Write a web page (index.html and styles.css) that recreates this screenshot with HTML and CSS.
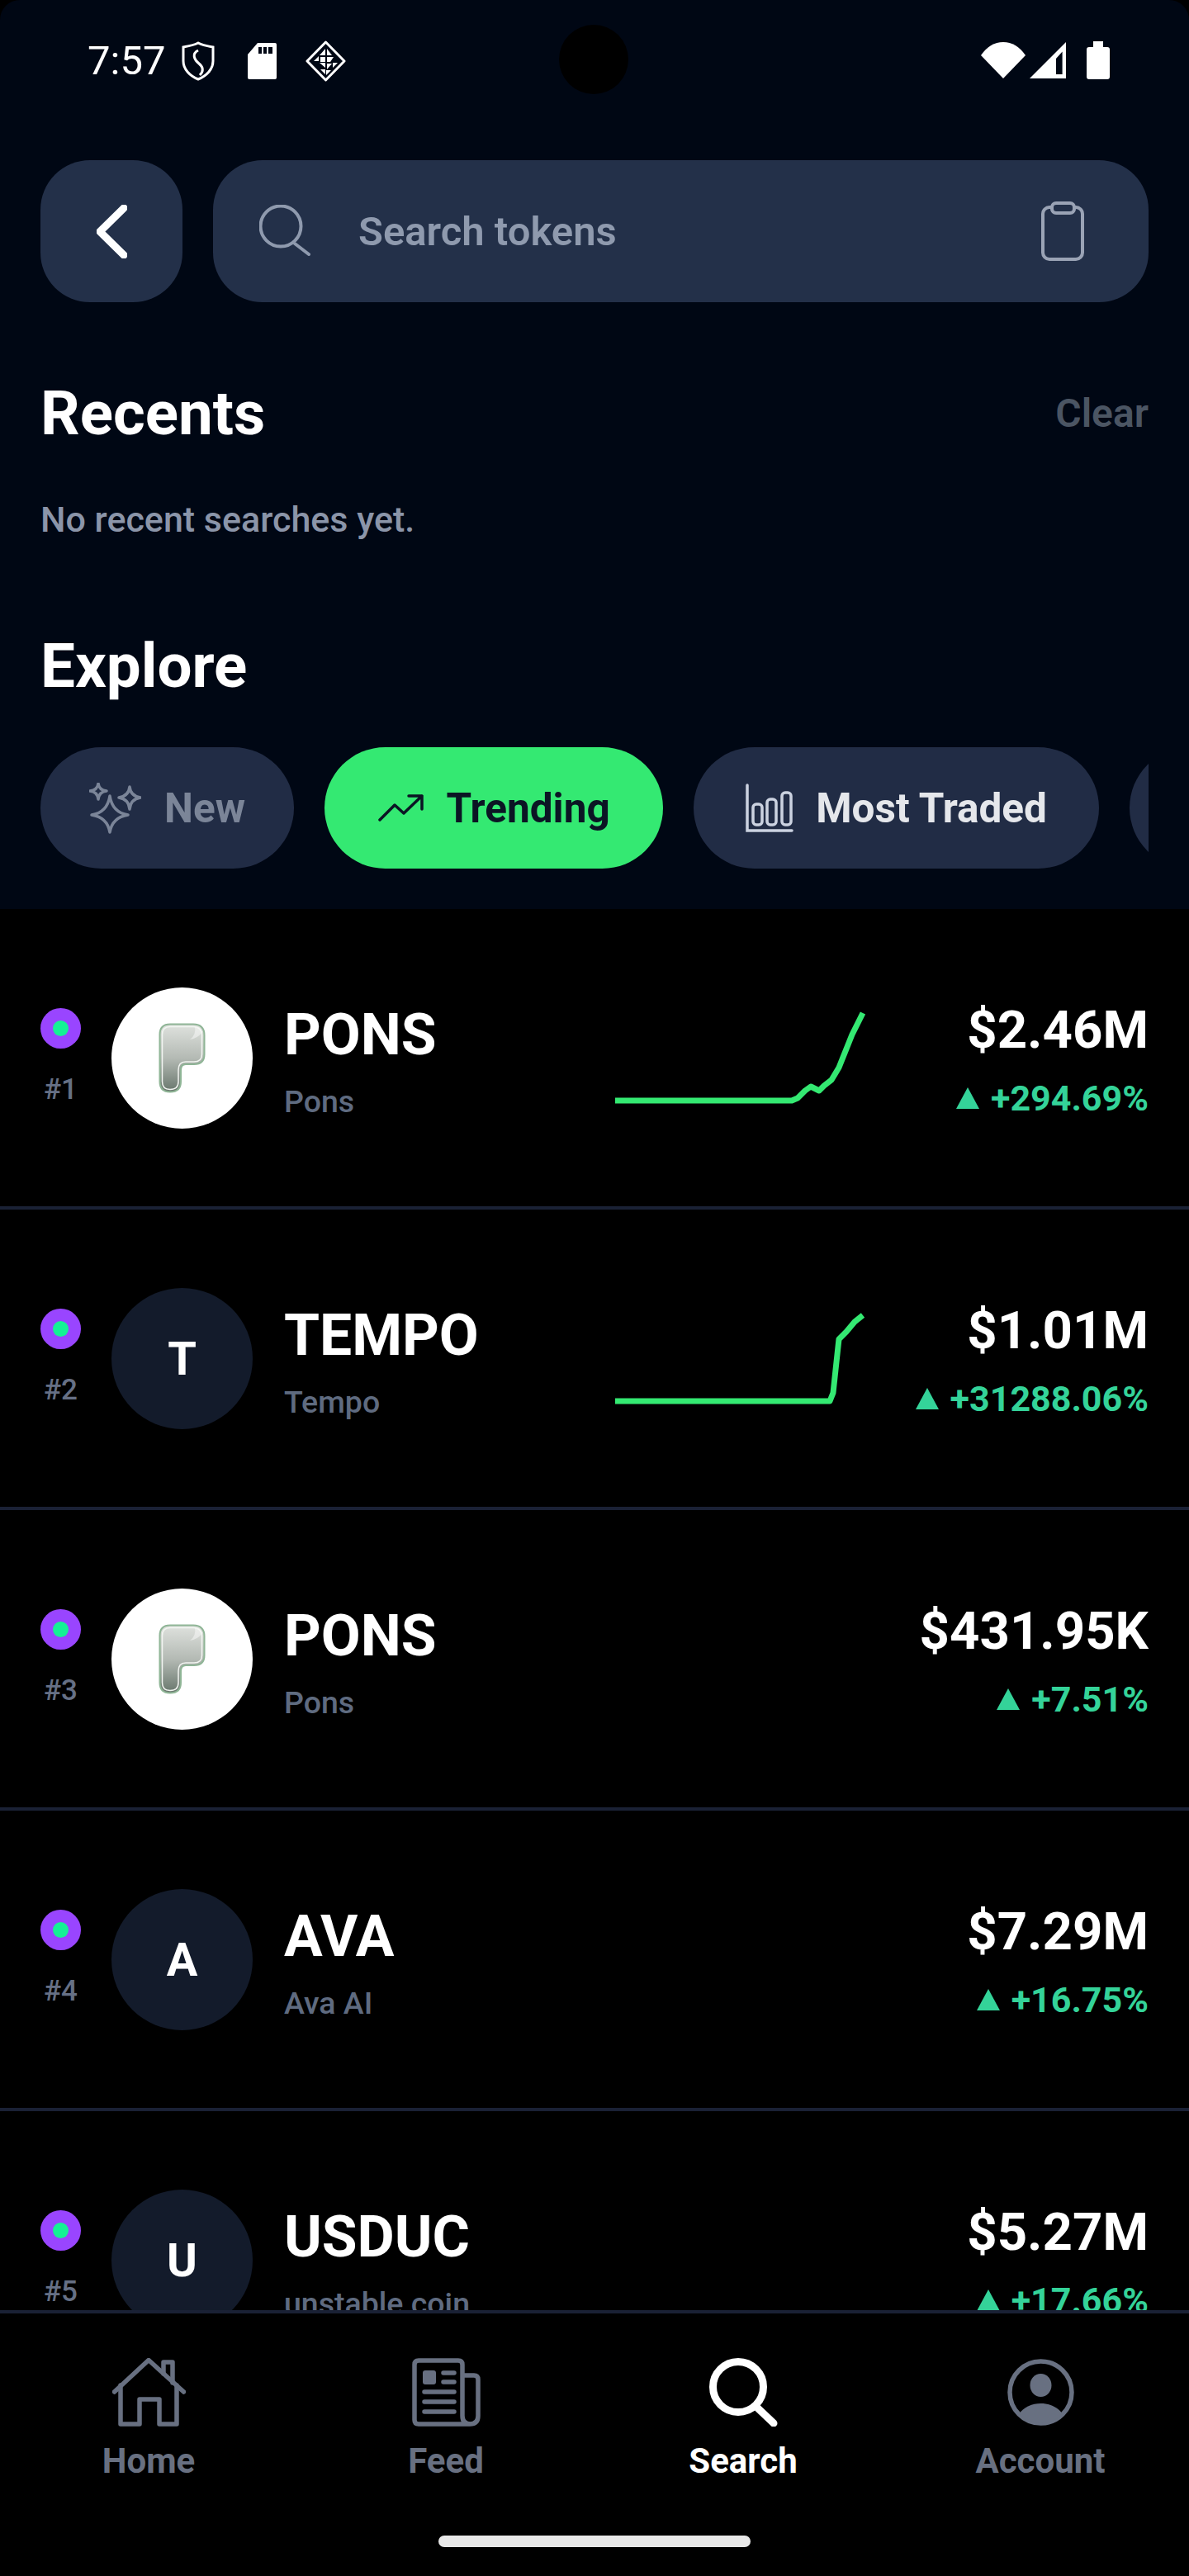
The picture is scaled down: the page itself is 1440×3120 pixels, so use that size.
FILE: index.html
```html
<!DOCTYPE html>
<html lang="en">
  <head>
    <meta http-equiv="Content-Type" content="text/html;charset=UTF-8" />
    <meta name="viewport" content="width=device-width, initial-scale=1.0" />
    <title>Search tokens</title>
    <link rel="stylesheet" href="styles.css">
  </head>
  <body>
    <div class="app">
      <header class="top">
        <div class="camera"></div>
        <div class="status">
          <div class="status-left">
            <span class="clock">7:57</span>
            <svg class="st-shield" width="40" height="48" viewBox="0 0 40 48"><path d="M20 2 C26 5 32 6 38 7 V24 C38 34 30 42 20 46 C10 42 2 34 2 24 V7 C8 6 14 5 20 2Z" fill="none" stroke="#fff" stroke-width="3"/><path d="M20 11 C12 15 15 22 21 27 C26 31 27 36 22 41" fill="none" stroke="#fff" stroke-width="3"/></svg>
            <svg class="st-sd" width="35" height="44" viewBox="0 0 35 44"><path fill-rule="evenodd" d="M12 0H33Q35 0 35 2V42Q35 44 33 44H2Q0 44 0 42V14ZM13 5V13H17V5ZM19 5V13H23V5ZM25 5V13H30V5Z" fill="#fff"/></svg>
            <svg class="st-diamond" width="49" height="50" viewBox="0 0 49 50"><path d="M24.5 2 L47 25 L24.5 48 L2 25Z" fill="none" stroke="#fff" stroke-width="3" stroke-linejoin="round"/><path d="M24 10 L24 18 L17 18Z M26 10 L32 18 L26 18Z M10 25 L16 19 L16 25Z M18 20 L24 20 L24 26 L18 26Z M26 20 L34 20 L30 26 L26 26Z M33 27 L39 27 L33 33Z M17 27 L24 27 L24 33Z M26 28 L32 28 L26 35Z M25 36 L31 36 L25 42Z M18 35 L24 35 L24 41Z" fill="#fff"/></svg>
          </div>
          <div class="status-right">
            <svg width="54" height="44" viewBox="0 0 54 44"><path d="M0 16 Q11 0 27 0 Q43 0 54 16 L27 44Z" fill="#fff"/></svg>
            <svg class="st-signal" width="44" height="44" viewBox="0 0 44 44"><path fill-rule="evenodd" d="M0 44L44 0V44ZM32 20V39H39.6V11.5Z" fill="#fff"/></svg>
            <svg class="st-battery" width="28" height="46" viewBox="0 0 28 46"><path d="M8 0H20V7H25Q28 7 28 10V43Q28 46 25 46H3Q0 46 0 43V10Q0 7 3 7H8Z" fill="#fff"/></svg>
          </div>
        </div>

        <div class="search-row">
          <button class="back">
            <svg width="37" height="65" viewBox="0 0 37 65"><polyline points="33,4 4,32.5 33,61" fill="none" stroke="#fff" stroke-width="9" stroke-linecap="round" stroke-linejoin="round"/></svg>
          </button>
          <div class="search-field">
            <svg class="search-icon" width="62" height="62" viewBox="0 0 62 62"><circle cx="26" cy="26" r="24.5" fill="none" stroke="#8f9aae" stroke-width="4"/><line x1="43" y1="47" x2="60" y2="60" stroke="#8f9aae" stroke-width="4" stroke-linecap="round"/></svg>
            <span class="search-text">Search tokens</span>
            <svg class="clip-icon" width="52" height="72" viewBox="0 0 52 72"><rect x="2" y="7" width="48" height="63" rx="8" fill="none" stroke="#9aa3b5" stroke-width="4"/><rect x="13" y="2" width="27" height="12" rx="5" fill="#233049" stroke="#9aa3b5" stroke-width="4"/></svg>
          </div>
        </div>

        <div class="section-head recents-head">
          <h2>Recents</h2>
          <span class="clear">Clear</span>
        </div>
        <p class="empty">No recent searches yet.</p>

        <div class="section-head explore-head">
          <h2>Explore</h2>
        </div>
        <div class="pills">
          <div class="pill pill-new">
            <svg width="63" height="62" viewBox="0 0 63 62"><g fill="none" stroke="#7b8598" stroke-width="3.5" stroke-linejoin="round"><path d="M25 16 Q28 36 47 39 Q28 42 25 60 Q22 42 3 39 Q22 36 25 16Z"/><path d="M11 1 Q12 9 21 10 Q12 11 11 20 Q10 11 1 10 Q10 9 11 1Z"/><path d="M49 5 Q50 16 62 18 Q50 20 49 32 Q48 20 36 18 Q48 16 49 5Z"/></g></svg>
            <span>New</span>
          </div>
          <div class="pill pill-active">
            <svg width="55" height="33" viewBox="0 0 55 33"><path d="M2 31 L20 13 L31 23 L53 2 M37 2 H53 V18" fill="none" stroke="#0b1524" stroke-width="3.5" stroke-linecap="round" stroke-linejoin="round"/></svg>
            <span>Trending</span>
          </div>
          <div class="pill pill-traded">
            <svg width="58" height="59" viewBox="0 0 58 59"><g fill="none" stroke="#cbd2e0" stroke-width="3.5" stroke-linecap="round"><path d="M2 2V57H56"/><rect x="9" y="25" width="11" height="25" rx="4"/><rect x="26" y="19" width="11" height="31" rx="4"/><rect x="44" y="11" width="11" height="39" rx="4"/></g></svg>
            <span>Most Traded</span>
          </div>
          <div class="pill pill-more"></div>
        </div>
      </header>

      <main class="list">
        <div class="row">
          <div class="rank"><span class="chain"><i></i></span><span class="rank-num">#1</span></div>
          <div class="avatar avatar-logo">
            <svg width="57" height="85" viewBox="0 0 57 85"><defs><linearGradient id="pa" x1="0" y1="0" x2="0" y2="1"><stop offset="0" stop-color="#dfe2de"/><stop offset="0.5" stop-color="#b4bab4"/><stop offset="1" stop-color="#68766c"/></linearGradient></defs><path d="M14 1.5H42Q55.500 1.500 55.500 15V38Q55.500 50 43 50H33Q27 50 27 57V71Q27 83.500 14 83.500Q1.500 83.500 1.500 71V14Q1.500 1.500 14 1.500Z" fill="url(#pa)" stroke="#8fb596" stroke-width="2"/><path d="M14 4.500H42Q52.500 4.500 52.500 15V38Q52.500 47 43 47H33Q24 47 24 57V71Q24 80.500 14 80.500Q4.500 80.500 4.500 71V14Q4.500 4.500 14 4.500Z" fill="none" stroke="#f2f5f1" stroke-width="1.500"/><path d="M38 20Q47 19 53 11Q50 5 44 5Q46 14 38 20Z" fill="#fff" opacity="0.45"/></svg>
          </div>
          <div class="info"><div class="name">PONS</div><div class="sub">Pons</div></div>
          <svg class="spark" width="301" height="112" viewBox="0 0 301 112"><polyline points="0,108 214,108 221,105 230,96 237,91 247,96 253,90 262,83 271,68 287,28 300,2" /></svg>
          <div class="figures"><div class="price">$2.46M</div><div class="change"><i></i>+294.69%</div></div>
        </div>

        <div class="row">
          <div class="rank"><span class="chain"><i></i></span><span class="rank-num">#2</span></div>
          <div class="avatar">T</div>
          <div class="info"><div class="name">TEMPO</div><div class="sub">Tempo</div></div>
          <svg class="spark" width="301" height="112" viewBox="0 0 301 112"><polyline points="0,108 260,108 264,98 267,70 271,33 280,24 290,12 300,4" /></svg>
          <div class="figures"><div class="price">$1.01M</div><div class="change"><i></i>+31288.06%</div></div>
        </div>

        <div class="row">
          <div class="rank"><span class="chain"><i></i></span><span class="rank-num">#3</span></div>
          <div class="avatar avatar-logo">
            <svg width="57" height="85" viewBox="0 0 57 85"><defs><linearGradient id="pb" x1="0" y1="0" x2="0" y2="1"><stop offset="0" stop-color="#dfe2de"/><stop offset="0.5" stop-color="#b4bab4"/><stop offset="1" stop-color="#68766c"/></linearGradient></defs><path d="M14 1.5H42Q55.500 1.500 55.500 15V38Q55.500 50 43 50H33Q27 50 27 57V71Q27 83.500 14 83.500Q1.500 83.500 1.500 71V14Q1.500 1.500 14 1.500Z" fill="url(#pb)" stroke="#8fb596" stroke-width="2"/><path d="M14 4.500H42Q52.500 4.500 52.500 15V38Q52.500 47 43 47H33Q24 47 24 57V71Q24 80.500 14 80.500Q4.500 80.500 4.500 71V14Q4.500 4.500 14 4.500Z" fill="none" stroke="#f2f5f1" stroke-width="1.500"/><path d="M38 20Q47 19 53 11Q50 5 44 5Q46 14 38 20Z" fill="#fff" opacity="0.45"/></svg>
          </div>
          <div class="info"><div class="name">PONS</div><div class="sub">Pons</div></div>
          <div class="figures"><div class="price">$431.95K</div><div class="change"><i></i>+7.51%</div></div>
        </div>

        <div class="row">
          <div class="rank"><span class="chain"><i></i></span><span class="rank-num">#4</span></div>
          <div class="avatar">A</div>
          <div class="info"><div class="name">AVA</div><div class="sub">Ava AI</div></div>
          <div class="figures"><div class="price">$7.29M</div><div class="change"><i></i>+16.75%</div></div>
        </div>

        <div class="row">
          <div class="rank"><span class="chain"><i></i></span><span class="rank-num">#5</span></div>
          <div class="avatar">U</div>
          <div class="info"><div class="name">USDUC</div><div class="sub">unstable coin</div></div>
          <div class="figures"><div class="price">$5.27M</div><div class="change"><i></i>+17.66%</div></div>
        </div>
      </main>

      <nav class="tabs">
        <div class="tab">
          <svg width="89" height="83" viewBox="0 0 89 83"><g fill="none" stroke="#687081" stroke-width="5.500" stroke-linecap="round" stroke-linejoin="round"><path d="M2.500 41L44 2.500L86.500 41"/><path d="M62 19V5H73V30"/><path d="M10 33V80H33V50H57V80H78V33"/></g></svg>
          <span>Home</span>
        </div>
        <div class="tab">
          <svg width="83" height="83" viewBox="0 0 83 83"><g fill="none" stroke="#687081" stroke-width="5.500" stroke-linecap="round" stroke-linejoin="round"><path d="M61 21H75Q80 21 80 26V70Q80 80 70 80H8Q3 80 3 75V8Q3 3 8 3H56Q61 3 61 8V70Q61 80 71 80"/><path d="M15 41H51M15 53H51M15 65H51M38 18H51M38 29H51"/></g><rect x="13" y="15" width="16" height="17" rx="3" fill="#687081"/></svg>
          <span>Feed</span>
        </div>
        <div class="tab tab-active">
          <svg width="83" height="83" viewBox="0 0 83 83"><circle cx="35" cy="35" r="30.500" fill="none" stroke="#fff" stroke-width="9"/><line x1="58" y1="60" x2="78" y2="79" stroke="#fff" stroke-width="9" stroke-linecap="round"/></svg>
          <span>Search</span>
        </div>
        <div class="tab">
          <svg width="83" height="83" viewBox="0 0 83 83"><circle cx="41.500" cy="41.500" r="37.500" fill="none" stroke="#687081" stroke-width="5.500"/><ellipse cx="41.500" cy="33" rx="13" ry="14" fill="#687081"/><path d="M15 68C21 59 31 55 41.500 55C52 55 62 59 68 68A38 38 0 0 1 15 68Z" fill="#687081"/></svg>
          <span>Account</span>
        </div>
        <div class="home-bar"></div>
      </nav>
    </div>
  </body>
</html>
```

FILE: styles.css
```css
/* page shell */
body { margin: 0; background: #000; font-family: Roboto, "Liberation Sans", sans-serif; color: #fff; }
.app { width: 1440px; height: 3120px; display: flex; flex-direction: column; overflow: hidden; }

/* top part with status bar, search and filters */
.top { position: relative; flex: 0 0 1101px; box-sizing: border-box; background: #000714; border-radius: 24px 24px 0 0; padding: 0 49px; }
.camera { position: absolute; left: 677px; top: 30px; width: 84px; height: 84px; border-radius: 50%; background: #000; }

.status { height: 194px; display: flex; justify-content: space-between; align-items: flex-start; }
.status-left { display: flex; align-items: center; height: 48px; margin: 50px 0 0 57px; }
.clock { font-size: 49px; font-weight: 400; line-height: 48px; width: 114px; }
.st-sd { margin-left: 40px; }
.st-diamond { margin-left: 35px; }
.status-right { display: flex; align-items: center; margin: 50px 47px 0 0; }
.st-signal { margin-left: 5px; }
.st-battery { margin-left: 25px; }

.search-row { display: flex; gap: 37px; height: 172px; }
.back { width: 172px; height: 172px; border: none; padding: 0; border-radius: 60px; background: #233049; display: flex; align-items: center; justify-content: center; }
.search-field { flex: 1; display: flex; align-items: center; background: #233049; border-radius: 60px; padding: 0 78px 0 56px; }
.search-icon { margin-top: -2px; }
.search-text { flex: 1; margin-left: 58px; font-size: 49px; font-weight: 600; color: #8f9aae; }

.section-head { display: flex; justify-content: space-between; align-items: center; }
.section-head h2 { margin: 0; font-size: 74.500px; line-height: 80px; font-weight: 700; }
.recents-head { margin-top: 95px; }
.explore-head { margin-top: 110px; }
.clear { font-size: 48px; font-weight: 600; color: #4b5563; margin-top: -2px; }
.empty { margin: 60px 0 0; font-size: 43px; line-height: 56px; font-weight: 500; color: #8b95a9; }

.pills { display: flex; gap: 37px; height: 147px; margin-top: 58px; overflow: hidden; }
.pill { flex: none; height: 147px; box-sizing: border-box; display: flex; align-items: center; gap: 28px; padding: 0 64.500px; border-radius: 74px; background: #212c45; font-size: 49.500px; font-weight: 700; white-space: nowrap; }
.pill-new { color: #7b8598; padding: 0 59px; }
.pill-active { background: #34e972; color: #0b1524; }
.pill-traded { color: #e5e7eb; padding: 0 63px; gap: 27px; }
.pill-more { width: 200px; }

/* token list */
.list { flex: 1; min-height: 0; overflow: hidden; }
.row { display: flex; align-items: flex-start; height: 364px; box-sizing: border-box; padding: 95px 49px 0; border-bottom: 4px solid #1a2135; }
.rank { width: 49px; display: flex; flex-direction: column; align-items: center; margin-top: 25px; }
.chain { width: 49px; height: 49px; border-radius: 50%; background: #9945ff; display: flex; align-items: center; justify-content: center; }
.chain i { width: 19px; height: 19px; border-radius: 50%; background: #14f195; }
.rank-num { margin-top: 30px; font-size: 35px; line-height: 40px; font-weight: 500; color: #667085; }
.avatar { flex: none; width: 171px; height: 171px; margin-left: 37px; border-radius: 50%; background: #131b2b; display: flex; align-items: center; justify-content: center; font-size: 56px; font-weight: 700; }
.avatar-logo { background: #fff; }
.info { flex: 0 0 401px; margin: 18px 0 0 38px; }
.name { font-size: 69.500px; line-height: 80px; font-weight: 700; }
.sub { margin-top: 15px; font-size: 37.500px; line-height: 50px; font-weight: 500; color: #5f6b80; }
.spark { flex: none; margin-top: 29px; overflow: visible; }
.spark polyline { fill: none; stroke: #34e972; stroke-width: 7; stroke-linejoin: round; }
.figures { margin: 12px 0 0 auto; display: flex; flex-direction: column; align-items: flex-end; }
.price { font-size: 63.500px; line-height: 80px; font-weight: 700; }
.change { margin-top: 18px; display: flex; align-items: center; gap: 14px; font-size: 43px; line-height: 48px; font-weight: 700; color: #34d399; }
.change i { width: 0; height: 0; border-left: 14px solid transparent; border-right: 14px solid transparent; border-bottom: 26px solid #34d399; }

/* bottom tabs */
.tabs { position: relative; flex: 0 0 322px; box-sizing: border-box; background: #000; border-top: 4px solid #1a2135; display: grid; grid-template-columns: repeat(4, 360px); align-content: start; padding-top: 54px; }
.tab { display: flex; flex-direction: column; align-items: center; gap: 18px; font-size: 42px; line-height: 48px; font-weight: 700; color: #687081; }
.tab-active { color: #fff; }
.home-bar { position: absolute; left: 531px; top: 269px; width: 378px; height: 14px; border-radius: 7px; background: #e8e8e8; }
```
